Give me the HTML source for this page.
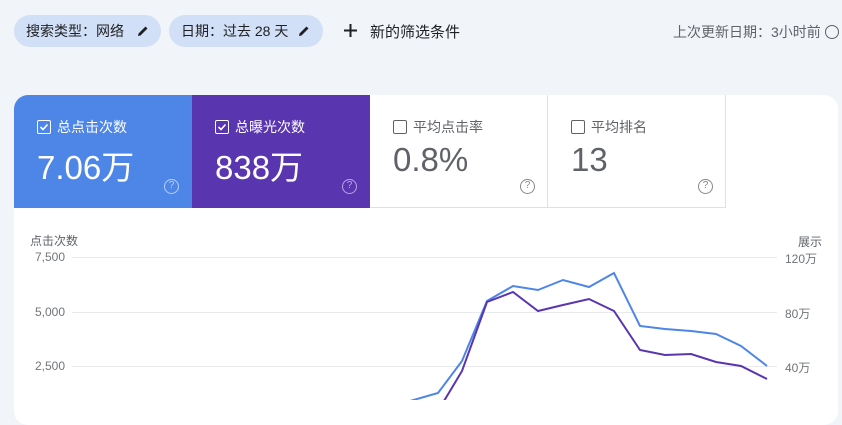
<!DOCTYPE html>
<html><head><meta charset="utf-8"><style>
*{margin:0;padding:0;box-sizing:border-box}
body{width:842px;height:400px;overflow:hidden;background:#f1f4f9;font-family:"Liberation Sans","Noto Sans CJK SC",sans-serif;position:relative;color:#3c4043}
.chip{position:absolute;top:15px;height:32px;border-radius:16px;background:#d2e0f7;font-size:14px;color:#202124;line-height:32px;padding-left:12px}
.chip svg{position:absolute;top:9px}
.t{position:absolute;white-space:nowrap}
.card{position:absolute;left:14px;top:95px;width:824px;height:330px;background:#fff;border-radius:14px;overflow:hidden}
.tile{position:absolute;top:0;width:178px;height:113px}
.tile .lab{position:absolute;left:23px;top:22px;font-size:14px}
.tile .val{position:absolute;left:23px;top:46px;font-size:33px}
.cb{display:inline-block;width:14px;height:14px;border:1.6px solid;border-radius:2px;vertical-align:-2px;margin-right:6px;position:relative}
.q{position:absolute;left:150px;top:84px;width:15px;height:15px;border:1.5px solid;border-radius:50%;font-size:10px;text-align:center;line-height:12px}
.yl{position:absolute;width:30px;text-align:right;font-size:12px;color:#70757a;left:35px}
.yr{position:absolute;left:785px;font-size:12px;color:#70757a}
</style></head><body>
<div class="chip" style="left:14px;width:147px">搜索类型：网络<svg style="left:122px" width="14" height="14" viewBox="0 0 14 14"><path d="M2 12 L2.5 9.5 L9.5 2.5 L11.5 4.5 L4.5 11.5 Z" fill="#202124"/></svg></div>
<div class="chip" style="left:169px;width:154px">日期：过去 28 天<svg style="left:128px" width="14" height="14" viewBox="0 0 14 14"><path d="M2 12 L2.5 9.5 L9.5 2.5 L11.5 4.5 L4.5 11.5 Z" fill="#202124"/></svg></div>
<svg style="position:absolute;left:343px;top:23px" width="15" height="15"><path d="M7.5 1v13M1 7.5h13" stroke="#202124" stroke-width="2"/></svg>
<div class="t" style="left:370px;top:21px;font-size:15px;color:#202124">新的筛选条件</div>
<div class="t" style="left:673px;top:22px;font-size:14px;color:#5f6368">上次更新日期：3小时前 <span style="display:inline-block;width:14px;height:14px;border:1.3px solid #5f6368;border-radius:50%;vertical-align:-2px"></span></div>
<div class="card">
 <div class="tile" style="left:0;background:#4e86e8;color:#fff"><div class="lab"><span class="cb" style="border-color:#fff"><svg style="position:absolute;left:1px;top:1px" width="10" height="10"><path d="M1.5 5l2.5 2.5 4.5-5" stroke="#fff" stroke-width="1.6" fill="none"/></svg></span>总点击次数</div><div class="val">7.06万</div><div class="q" style="border-color:#b9cff5;color:#b9cff5">?</div></div>
 <div class="tile" style="left:178px;background:#5a35b0;color:#fff"><div class="lab"><span class="cb" style="border-color:#fff"><svg style="position:absolute;left:1px;top:1px" width="10" height="10"><path d="M1.5 5l2.5 2.5 4.5-5" stroke="#fff" stroke-width="1.6" fill="none"/></svg></span>总曝光次数</div><div class="val">838万</div><div class="q" style="border-color:#b9a6e4;color:#b9a6e4">?</div></div>
 <div class="tile" style="left:356px;border-right:1px solid #e0e0e0;border-bottom:1px solid #e0e0e0;color:#5f6368"><div class="lab"><span class="cb" style="border-color:#5f6368"></span>平均点击率</div><div class="val">0.8%</div><div class="q" style="border-color:#888;color:#888">?</div></div>
 <div class="tile" style="left:534px;border-right:1px solid #e0e0e0;border-bottom:1px solid #e0e0e0;color:#5f6368"><div class="lab"><span class="cb" style="border-color:#5f6368"></span>平均排名</div><div class="val">13</div><div class="q" style="border-color:#888;color:#888">?</div></div>
</div>
<div class="t" style="left:30px;top:232px;font-size:12px;color:#5f6368">点击次数</div>
<div class="yl" style="top:250px">7,500</div>
<div class="yl" style="top:305px">5,000</div>
<div class="yl" style="top:359px">2,500</div>
<div class="t" style="left:798px;top:233px;font-size:12px;color:#5f6368">展示</div>
<div class="yr" style="top:250px">120万</div>
<div class="yr" style="top:305px">80万</div>
<div class="yr" style="top:359px">40万</div>
<svg style="position:absolute;left:0;top:0" width="842" height="400">
<path d="M72 257.5H777M72 312.5H777M72 366.5H777" stroke="#e8eaed" stroke-width="1"/>
<polyline fill="none" stroke="#4e86e8" stroke-width="2" points="410,401 438,393 462,361 487,301 513,286 538,290 563,280 589,287 614,273 640,326 665,329 691,331 716,334 741,346 767,366"/>
<polyline fill="none" stroke="#5a35b0" stroke-width="2" points="444,401 462,371 487,302 513,292 538,311 563,305 589,299 614,311 640,350 665,355 691,354 716,362 741,366 767,379"/>
</svg>
</body></html>
